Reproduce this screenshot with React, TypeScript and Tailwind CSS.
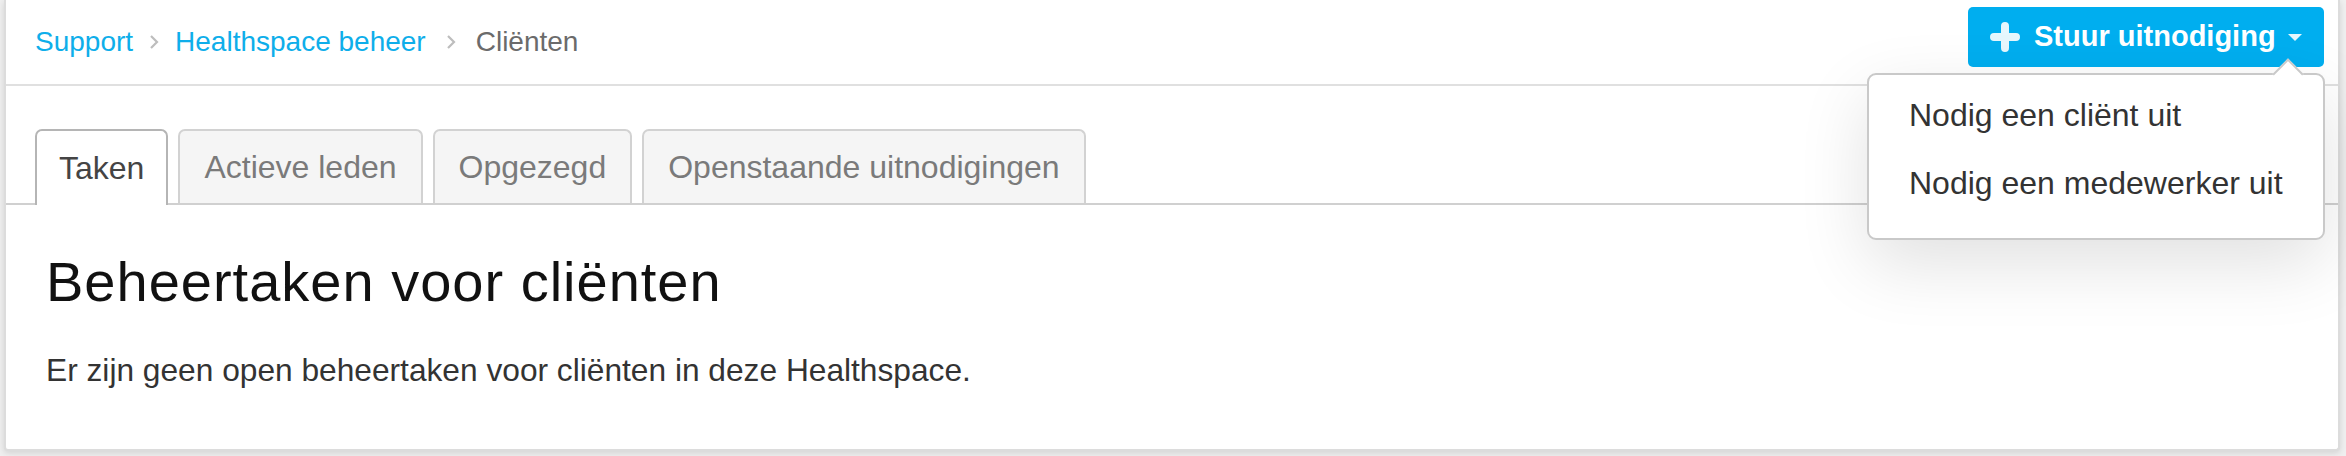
import { ReactNode } from 'react';

// breadcrumb separator
const Chevron = ({ className }: { className: string }) => (
  <svg width="10" height="16" viewBox="0 0 10 16" className={className}>
    <path d="M2 2l6 6-6 6" fill="none" stroke="#bdbdbd" strokeWidth="2.2" />
  </svg>
);

const Tab = ({ children, active }: { children: ReactNode; active?: boolean }) => (
  <div
    className={
      active
        ? 'h-[76px] -mb-[2px] px-[22px] flex items-center rounded-t-[7px] border-2 border-b-0 border-[#b5b5b5] bg-white text-[#444] text-[32px]'
        : 'h-[74px] px-[24px] flex items-center rounded-t-[7px] border-2 border-b-0 border-[#d2d2d2] bg-[#f5f5f5] text-[#7a7a7a] text-[32px]'
    }
  >
    {children}
  </div>
);

const App = () => {
  return (
    <div className="h-[456px] bg-[#efefef] font-['Liberation_Sans',Arial,sans-serif] overflow-hidden">
      <div className="relative ml-[4px] mr-[6px] h-[451px] bg-white border-l-2 border-r-2 border-b-2 border-[#dcdcdc] rounded-b-[4px] shadow-[0_2px_6px_rgba(0,0,0,0.12)]">
        {/* header */}
        <div className="h-[86px] flex items-start justify-between border-b-2 border-[#e0e0e0] pl-[29px] pr-[14px]">
          <div className="flex items-center h-[84px] text-[28px]">
            <span className="text-[#0eaeea]">Support</span>
            <Chevron className="mx-[16px]" />
            <span className="text-[#0eaeea]">Healthspace beheer</span>
            <Chevron className="ml-[20px] mr-[20px]" />
            <span className="text-[#6b6b6b]">Cliënten</span>
          </div>
          <button className="mt-[7px] h-[60px] w-[356px] rounded-[5px] bg-[#00aeef] text-white flex items-center pl-[22px]">
            <svg width="30" height="30" viewBox="0 0 30 30" className="mr-[14px]">
              <path d="M15 4v22M4 15h22" stroke="#e6f7fd" strokeWidth="8" strokeLinecap="round" />
            </svg>
            <span className="text-[29px] font-bold">Stuur uitnodiging</span>
            <svg width="16" height="10" viewBox="0 0 16 10" className="ml-[11px] mt-[2px]">
              <path d="M1 1h14L8 8z" fill="#e6f7fd" />
            </svg>
          </button>
        </div>

        {/* tabs */}
        <div className="mt-[43px] pl-[29px] flex items-end gap-[10px] border-b-2 border-[#d0d0d0]">
          <Tab active>Taken</Tab>
          <Tab>Actieve leden</Tab>
          <Tab>Opgezegd</Tab>
          <Tab>Openstaande uitnodigingen</Tab>
        </div>

        <div className="px-[40px] pt-[49px]">
          <h1 className="text-[56px] leading-none text-[#111] tracking-[1px]">Beheertaken voor cliënten</h1>
          <p className="mt-[45px] text-[31.7px] leading-none text-[#333]">
            Er zijn geen open beheertaken voor cliënten in deze Healthspace.
          </p>
        </div>

        {/* dropdown menu */}
        <div className="absolute left-[1861px] top-[73px] w-[458px] h-[167px] bg-white border-2 border-[#c9c9c9] rounded-[9px] shadow-[0_24px_70px_rgba(0,0,0,0.12)] pt-[6px] pl-[40px]">
          <div className="absolute -top-[12px] right-[24px] w-[22px] h-[22px] rotate-45 bg-white border-l-2 border-t-2 border-[#c9c9c9]" />
          <div className="h-[68px] flex items-center text-[32px] text-[#333]">Nodig een cliënt uit</div>
          <div className="h-[68px] flex items-center text-[32px] text-[#333]">Nodig een medewerker uit</div>
        </div>
      </div>
    </div>
  );
};

export default App;
